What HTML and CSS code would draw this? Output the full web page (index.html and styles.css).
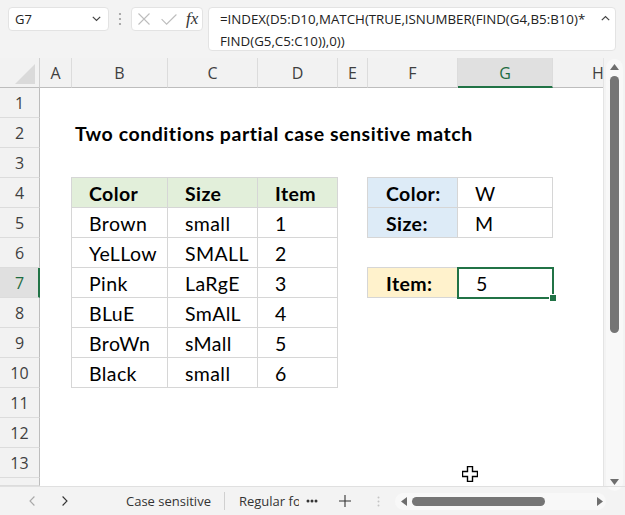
FILE: index.html
```html
<!DOCTYPE html>
<html>
<head>
<meta charset="utf-8">
<link rel="stylesheet" href="styles.css">
</head>
<body>
<div class="app">
  <div class="fbar">
    <div class="namebox"><span>G7</span>
      <svg class="chev" width="9" height="6" viewBox="0 0 9 6"><path d="M0.8 0.8l3.7 3.7 3.7-3.7" fill="none" stroke="#444" stroke-width="1.2"/></svg>
    </div>
    <div class="grip">
      <svg width="4" height="14" viewBox="0 0 4 14"><circle cx="2" cy="2" r="1.1" fill="#9a9a9a"/><circle cx="2" cy="7" r="1.1" fill="#9a9a9a"/><circle cx="2" cy="12" r="1.1" fill="#9a9a9a"/></svg>
    </div>
    <div class="fxbox">
      <svg width="12" height="12" viewBox="0 0 12 12"><path d="M0.5 0.5l11 11M11.5 0.5l-11 11" stroke="#bdbdbd" stroke-width="1.1"/></svg>
      <svg width="16" height="11" viewBox="0 0 16 11"><path d="M0.6 5.2l5 5L15.4 0.5" fill="none" stroke="#bdbdbd" stroke-width="1.1"/></svg>
      <span class="fx">fx</span>
    </div>
    <div class="formula">
      <div class="ftext">=INDEX(D5:D10,MATCH(TRUE,ISNUMBER(FIND(G4,B5:B10)*<br>FIND(G5,C5:C10)),0))</div>
      <svg class="caret" width="9" height="6" viewBox="0 0 9 6"><path d="M0.8 5.2l3.7-3.7 3.7 3.7" fill="none" stroke="#444" stroke-width="1.2"/></svg>
    </div>
  </div>

  <div class="main">
    <div class="sheet">
      <div class="corner"><svg width="20" height="20" viewBox="0 0 20 20"><path d="M20 0V20H0Z" fill="#dadada"/></svg></div>
      <div class="ch colA">A</div>
      <div class="ch colB">B</div>
      <div class="ch colC">C</div>
      <div class="ch colD">D</div>
      <div class="ch colE">E</div>
      <div class="ch colF">F</div>
      <div class="ch colG sel">G</div>
      <div class="ch colH"><span class="hclip">H</span></div>

      <div class="rh row1">1</div>
      <div class="rh row2">2</div>
      <div class="rh row3">3</div>
      <div class="rh row4">4</div>
      <div class="rh row5">5</div>
      <div class="rh row6">6</div>
      <div class="rh row7 sel">7</div>
      <div class="rh row8">8</div>
      <div class="rh row9">9</div>
      <div class="rh row10">10</div>
      <div class="rh row11">11</div>
      <div class="rh row12">12</div>
      <div class="rh row13">13</div>
      <div class="rh row14"></div>

      <div class="title row2">Two conditions partial case sensitive match</div>

      <div class="tbl1">
        <div class="cell hd">Color</div><div class="cell hd">Size</div><div class="cell hd">Item</div>
        <div class="cell">Brown</div><div class="cell">small</div><div class="cell">1</div>
        <div class="cell">YeLLow</div><div class="cell">SMALL</div><div class="cell">2</div>
        <div class="cell">Pink</div><div class="cell">LaRgE</div><div class="cell">3</div>
        <div class="cell">BLuE</div><div class="cell">SmAlL</div><div class="cell">4</div>
        <div class="cell">BroWn</div><div class="cell">sMall</div><div class="cell">5</div>
        <div class="cell">Black</div><div class="cell">small</div><div class="cell">6</div>
      </div>

      <div class="tbl2">
        <div class="cell lbl blue">Color:</div><div class="cell">W</div>
        <div class="cell lbl blue">Size:</div><div class="cell">M</div>
      </div>

      <div class="tbl3">
        <div class="cell lbl yellow">Item:</div><div class="cell active">5</div>
      </div>
    </div>

    <div class="vscroll">
      <div class="vtrack">
        <svg class="arr" width="9" height="6" viewBox="0 0 9 6"><path d="M4.5 0L9 6H0Z" fill="#6e6e6e"/></svg>
        <div class="vthumb"></div>
        <div class="vspace"></div>
        <svg class="arr" width="9" height="6" viewBox="0 0 9 6"><path d="M0 0H9L4.5 6Z" fill="#6e6e6e"/></svg>
      </div>
    </div>
  </div>

  <div class="tabs">
    <svg class="nav prev" width="6" height="10" viewBox="0 0 6 10"><path d="M5.4 0.5L1 5l4.4 4.5" fill="none" stroke="#a8a8a8" stroke-width="1.1"/></svg>
    <svg class="nav next" width="6" height="10" viewBox="0 0 6 10"><path d="M0.6 0.5L5 5 0.6 9.5" fill="none" stroke="#333" stroke-width="1.1"/></svg>
    <div class="tab">Case sensitive</div>
    <div class="tsep"></div>
    <div class="tab clip">Regular formula</div>
    <svg class="more" width="12" height="4" viewBox="0 0 12 4"><circle cx="2" cy="2" r="1.5" fill="#333"/><circle cx="6" cy="2" r="1.5" fill="#333"/><circle cx="10" cy="2" r="1.5" fill="#333"/></svg>
    <svg class="plus" width="12" height="12" viewBox="0 0 12 12"><path d="M6 0v12M0 6h12" stroke="#333" stroke-width="1.1"/></svg>
    <svg class="hgrip" width="3" height="11" viewBox="0 0 3 11"><circle cx="1.5" cy="1.5" r="1" fill="#c4c4c4"/><circle cx="1.5" cy="5.5" r="1" fill="#c4c4c4"/><circle cx="1.5" cy="9.5" r="1" fill="#c4c4c4"/></svg>
    <div class="htrack">
      <svg width="6" height="9" viewBox="0 0 6 9"><path d="M6 0V9L0 4.5Z" fill="#6e6e6e"/></svg>
      <div class="hthumb"></div>
      <div class="hspace"></div>
      <svg width="6" height="9" viewBox="0 0 6 9"><path d="M0 0V9L6 4.5Z" fill="#6e6e6e"/></svg>
    </div>
  </div>

  <svg class="cursor" width="16" height="16" viewBox="0 0 16 16">
    <path d="M5.5 0.5h5v5h5v5h-5v5h-5v-5h-5v-5h5z" fill="#fff" stroke="#000" stroke-width="1.4" stroke-linejoin="miter"/>
  </svg>
</div>
</body>
</html>
```

FILE: styles.css
```css
* { box-sizing: border-box; margin: 0; padding: 0; }
html, body { margin: 0; width: 625px; height: 515px; overflow: hidden; }
body { background: #f3f3f3; font-family: "Open Sans", "Noto Sans", sans-serif; color: #222; }

.app { position: relative; display: flex; flex-direction: column; width: 625px; height: 515px; }

/* formula bar */
.fbar { height: 58px; flex: none; display: flex; align-items: flex-start; padding: 7px 9px 0 8px; }
.namebox { width: 101px; height: 24px; background: #fff; border: 1px solid #e3e3e3; border-radius: 4px;
  display: flex; align-items: center; justify-content: space-between; padding: 0 7px 0 6px;
  font-size: 13px; color: #222; }
.grip { width: 22px; height: 24px; display: flex; align-items: center; justify-content: center; }
.fxbox { width: 72px; height: 24px; background: #fff; border: 1px solid #e3e3e3; border-radius: 4px;
  display: flex; align-items: center; padding: 0 0 0 6px; gap: 0; }
.fxbox svg:first-child { margin-right: 11px; }
.fxbox svg:nth-child(2) { margin-right: 9px; }
.fx { font-family: "Liberation Serif", serif; font-style: italic; font-size: 17px; color: #333; line-height: 1; margin-top: -2px; }
.formula { margin-left: 5px; flex: 1; height: 44px; background: #fff; border: 1px solid #e3e3e3; border-radius: 4px;
  display: flex; justify-content: space-between; padding: 0 5px 0 11px; }
.ftext { font-size: 13.3px; line-height: 22px; color: #222; white-space: nowrap; }
.caret { margin-top: 7px; }

/* main area */
.main { height: 428px; flex: none; display: flex; }
.sheet { width: 603px; flex: none; background: #fff; display: grid;
  grid-template-columns: 40px 32px 96px 90px 80px 30px 90px 95px 50px;
  grid-template-rows: 30px repeat(13, 30px) 8px; overflow: hidden; }

.corner { grid-row: 1; grid-column: 1; background: #f2f2f2; border-right: 1px solid #d0d0d0; border-bottom: 1px solid #bdbdbd;
  display: flex; align-items: flex-end; justify-content: flex-end; padding: 0 4px 3px 0; }
.ch { grid-row: 1; background: #f2f2f2; border-right: 1px solid #dcdcdc; border-bottom: 1px solid #bdbdbd;
  display: flex; align-items: center; justify-content: center; font-size: 16px; color: #3f3f3f; padding-top: 1px; }
.ch.sel { background: #e0e0e0; border-bottom: 2px solid #217346; color: #1d6b40; }
.colH { justify-content: flex-start; border-right: none; overflow: hidden; }
.hclip { margin-left: 39px; }

.colA { grid-column: 2; } .colB { grid-column: 3; } .colC { grid-column: 4; } .colD { grid-column: 5; }
.colE { grid-column: 6; } .colF { grid-column: 7; } .colG { grid-column: 8; } .colH { grid-column: 9; }

.row1 { grid-row: 2; } .row2 { grid-row: 3; } .row3 { grid-row: 4; } .row4 { grid-row: 5; }
.row5 { grid-row: 6; } .row6 { grid-row: 7; } .row7 { grid-row: 8; } .row8 { grid-row: 9; }
.row9 { grid-row: 10; } .row10 { grid-row: 11; } .row11 { grid-row: 12; } .row12 { grid-row: 13; }
.row13 { grid-row: 14; } .row14 { grid-row: 15; }

.rh { grid-column: 1; background: #f2f2f2; border-right: 1px solid #bdbdbd; border-bottom: 1px solid #dcdcdc;
  display: flex; align-items: center; justify-content: center; font-size: 16px; color: #3f3f3f; padding-top: 1px; }
.rh.sel { background: #e0e0e0; border-right: 2px solid #217346; color: #1d6b40; padding-left: 1px; }

.title { grid-column: 3 / 10; font-family: Lato, "Liberation Sans", sans-serif; font-weight: 700; font-size: 19.5px; letter-spacing: 0.55px;
  color: #000; display: flex; align-items: center; padding-left: 3px; white-space: nowrap; padding-top: 1px; }

.tbl1, .tbl2, .tbl3 { display: grid; margin: -1px 0 0 -1px; border-top: 1px solid #d6d6d6; border-left: 1px solid #d6d6d6; }
.tbl1 { grid-column: 3 / 6; grid-row: 5 / 12; grid-template-columns: 96px 90px 80px; grid-template-rows: repeat(7, 30px); }
.tbl2 { grid-column: 7 / 9; grid-row: 5 / 7; grid-template-columns: 90px 95px; grid-template-rows: repeat(2, 30px); }
.tbl3 { grid-column: 7 / 9; grid-row: 8 / 9; grid-template-columns: 90px 95px; grid-template-rows: 30px; }

.cell { border-right: 1px solid #d6d6d6; border-bottom: 1px solid #d6d6d6; display: flex; align-items: center;
  padding: 1px 0 0 17px; font-family: Lato, "Liberation Sans", sans-serif; font-size: 19.5px; letter-spacing: 0.4px; color: #000; white-space: nowrap; }
.cell.hd { background: #e2efda; font-weight: 700; }
.cell.lbl { font-weight: 700; padding-left: 18px; }
.blue { background: #ddebf7; }
.yellow { background: #fff2cc; }
.active { position: relative; outline: 2px solid #217346; outline-offset: -1px; padding-left: 18px; }
.active::after { content: ""; position: absolute; right: -4px; bottom: -4px; width: 6px; height: 6px; background: #217346; border: 1px solid #fff; box-sizing: content-box; margin: -1px; }

/* vertical scrollbar */
.vscroll { flex: 1; background: #f3f3f3; border-left: 1px solid #e4e4e4; padding: 1px 2px 0 2px; }
.vtrack { height: 432px; background: #f8f8f8; border-radius: 9px; display: flex; flex-direction: column; align-items: center; padding: 5px 0 6px; }
.vthumb { width: 9px; height: 257px; background: #757575; border-radius: 5px; margin-top: 6px; }
.vspace { flex: 1; }

/* tabs bar */
.tabs { height: 29px; flex: none; display: flex; align-items: center; border-top: 1px solid #e0e0e0; }
.nav.prev { margin-left: 29px; }
.nav.next { margin-left: 27px; }
.tab { font-size: 13px; color: #333; white-space: nowrap; }
.tab:nth-of-type(1) { margin-left: 58px; }
.tsep { width: 1px; height: 18px; background: #d0d0d0; margin-left: 13px; }
.tab.clip { margin-left: 14px; width: 60px; overflow: hidden; }
.more { margin-left: 7px; }
.plus { margin-left: 21px; }
.hgrip { margin-left: 26px; }
.htrack { margin-left: 15px; width: 211px; height: 17px; background: #f8f8f8; border-radius: 9px; display: flex; align-items: center; padding: 0 3px 0 6px; }
.hthumb { width: 133px; height: 9px; background: #757575; border-radius: 5px; margin-left: 5px; }
.hspace { flex: 1; }

.cursor { position: absolute; left: 462px; top: 466px; }
```
